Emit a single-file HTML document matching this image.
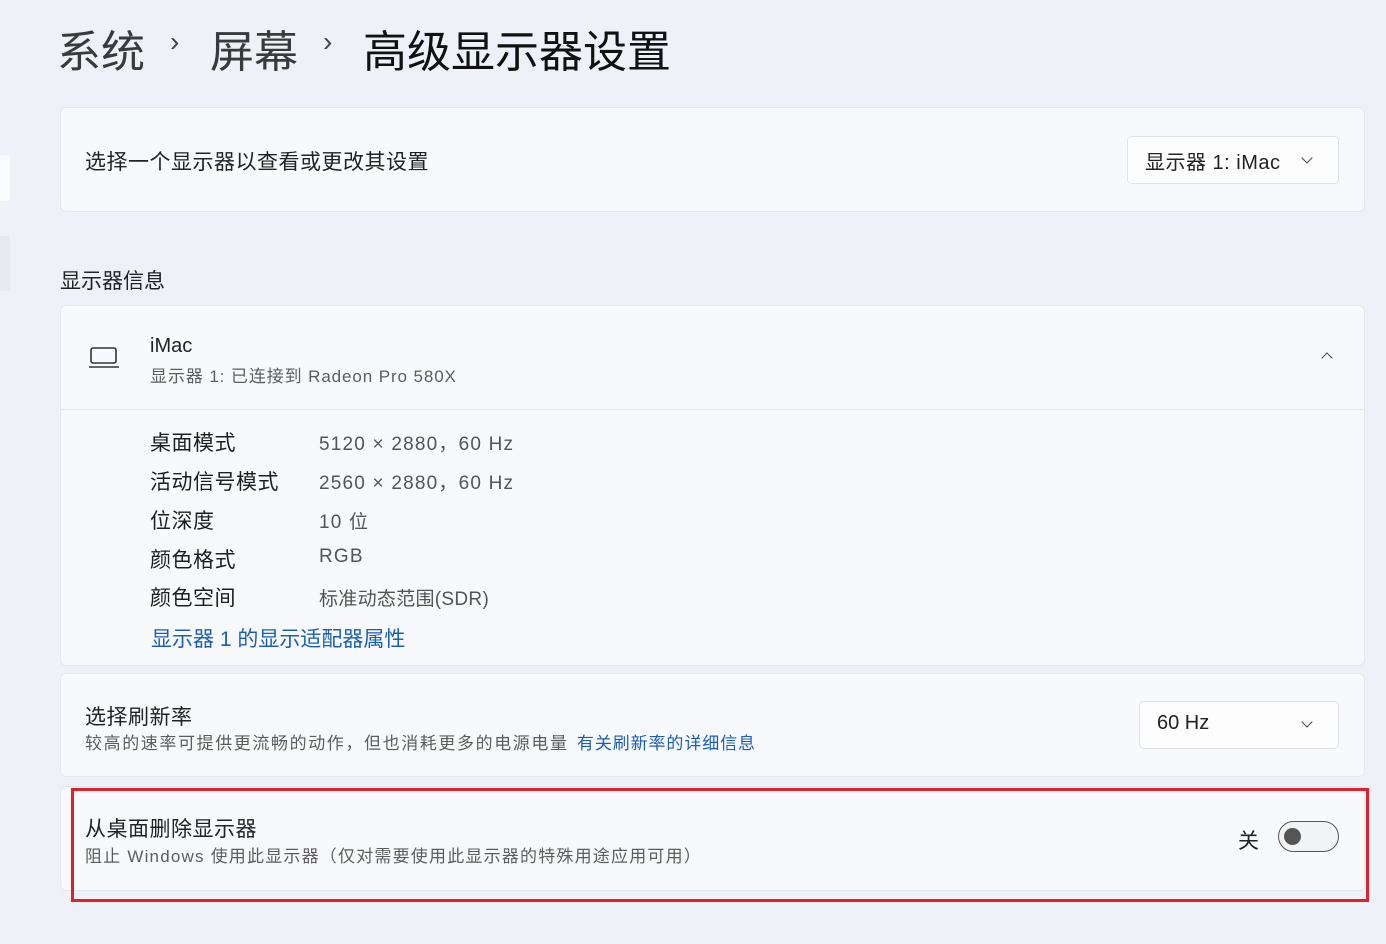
<!DOCTYPE html>
<html><head><meta charset="utf-8"><style>
*{margin:0;padding:0;box-sizing:border-box}
body{width:1386px;height:944px;background:#eef2f8;font-family:"Liberation Sans","Noto Sans CJK SC",sans-serif;color:#1b1b1b;position:relative;overflow:hidden}
.a{position:absolute;white-space:nowrap}
.card{position:absolute;left:60px;width:1305px;background:#f8f9fc;border:1px solid #e4e8ef;border-radius:6px}
.t{font-size:21px;color:#222;letter-spacing:0.5px}
.s{font-size:17px;color:#5d5d5d;letter-spacing:0.9px}
.lbl{font-size:21px;color:#1e1e1e;letter-spacing:0.5px}
.val{font-size:19px;color:#555;letter-spacing:1.2px}
.dd{position:absolute;background:#fdfdfe;border:1px solid #e0e3e8;border-radius:5px}
.chev{position:absolute;width:8px;height:8px;border-right:1.5px solid #444;border-bottom:1.5px solid #444;transform:rotate(45deg)}
</style></head><body>
<div class="a" style="left:0;top:155px;width:10px;height:46px;background:#fafbfd;border-radius:0 3px 3px 0"></div>
<div class="a" style="left:0;top:236px;width:10px;height:55px;background:#e6e9ef"></div>

<div class="a" style="left:57px;top:16px;font-size:44px;color:#3a3a3a">系统</div>
<div class="a" style="left:170px;top:26px;font-size:28px;color:#444">›</div>
<div class="a" style="left:210px;top:16px;font-size:44px;color:#3a3a3a">屏幕</div>
<div class="a" style="left:323px;top:26px;font-size:28px;color:#444">›</div>
<div class="a" style="left:363px;top:16px;font-size:44px;color:#111">高级显示器设置</div>

<div class="card" style="top:107px;height:105px"></div>
<div class="a t" style="left:85px;top:146px">选择一个显示器以查看或更改其设置</div>
<div class="dd" style="left:1127px;top:136px;width:212px;height:48px"></div>
<div class="a" style="left:1145px;top:146px;font-size:20px;color:#222;letter-spacing:0.5px">显示器 1: iMac</div>
<div class="chev" style="left:1303px;top:154px"></div>

<div class="a" style="left:60px;top:265px;font-size:21px;color:#222">显示器信息</div>

<div class="card" style="top:305px;height:361px"></div>
<div class="a" style="left:60px;top:409px;width:1305px;height:1px;background:#e4e8ef"></div>
<svg class="a" style="left:88px;top:346px" width="32" height="24" viewBox="0 0 32 24"><rect x="3" y="2" width="25" height="15" rx="2" fill="none" stroke="#333" stroke-width="1.6"/><line x1="1" y1="21" x2="31" y2="21" stroke="#333" stroke-width="1.6"/></svg>
<div class="a" style="left:150px;top:335px;font-size:20px;color:#222">iMac</div>
<div class="a s" style="left:150px;top:362px">显示器 1: 已连接到 Radeon Pro 580X</div>
<div class="chev" style="left:1323px;top:354px;transform:rotate(-135deg)"></div>

<div class="a lbl" style="left:150px;top:427px">桌面模式</div><div class="a val" style="left:319px;top:429px">5120 × 2880，60 Hz</div>
<div class="a lbl" style="left:150px;top:466px">活动信号模式</div><div class="a val" style="left:319px;top:468px">2560 × 2880，60 Hz</div>
<div class="a lbl" style="left:150px;top:505px">位深度</div><div class="a val" style="left:319px;top:507px">10 位</div>
<div class="a lbl" style="left:150px;top:544px">颜色格式</div><div class="a val" style="left:319px;top:546px">RGB</div>
<div class="a lbl" style="left:150px;top:582px">颜色空间</div><div class="a val" style="left:319px;top:584px;letter-spacing:0.3px">标准动态范围(SDR)</div>
<div class="a" style="left:151px;top:623px;font-size:21px;color:#1a5fb4">显示器 1 的显示适配器属性</div>

<div class="card" style="top:673px;height:104px"></div>
<div class="a t" style="left:85px;top:701px">选择刷新率</div>
<div class="a s" style="left:85px;top:729px;letter-spacing:1.6px">较高的速率可提供更流畅的动作，但也消耗更多的电源电量 <span style="color:#1a5fb4;margin-left:2px;letter-spacing:0.9px">有关刷新率的详细信息</span></div>
<div class="dd" style="left:1139px;top:701px;width:200px;height:48px"></div>
<div class="a" style="left:1157px;top:712px;font-size:20px;color:#222">60 Hz</div>
<div class="chev" style="left:1303px;top:718px"></div>

<div class="card" style="top:786px;height:105px"></div>
<div class="a t" style="left:85px;top:813px">从桌面删除显示器</div>
<div class="a s" style="left:85px;top:842px;letter-spacing:1.2px">阻止 Windows 使用此显示器（仅对需要使用此显示器的特殊用途应用可用）</div>
<div class="a" style="left:1238px;top:825px;font-size:21px;color:#222">关</div>
<div class="a" style="left:1278px;top:821px;width:61px;height:31px;border:1.5px solid #555;border-radius:16px;background:#f2f3f5"></div>
<div class="a" style="left:1284px;top:828px;width:17px;height:17px;border-radius:50%;background:#555"></div>

<div class="a" style="left:71px;top:788px;width:1298px;height:114px;border:3px solid #e0202a"></div>
</body></html>
